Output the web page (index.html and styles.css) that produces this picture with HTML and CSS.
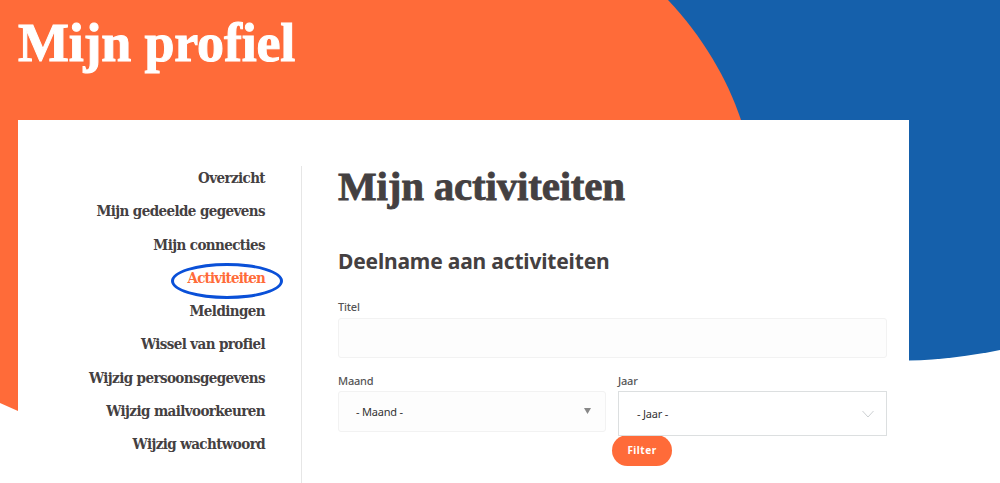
FILE: index.html
```html
<!DOCTYPE html>
<html lang="nl">
<head>
<meta charset="utf-8">
<title>Mijn profiel</title>
<link rel="stylesheet" href="styles.css">
</head>
<body>
<svg class="backdrop" viewBox="0 0 1000 483" width="1000" height="483" aria-hidden="true">
  <path class="blue" d="M600 0H1000V350C970 356 940 360 909 360.500L600 360Z"/>
  <path class="orange" d="M0 0H668C702 36 727 78 741 120V411H18L0 403Z"/>
  <rect class="white" x="18" y="120" width="891" height="363"/>
</svg>
<div class="page">
  <header class="hero"><h1>Mijn profiel</h1></header>
  <div class="card">
    <nav class="side">
      <a href="#">Overzicht</a>
      <a href="#">Mijn gedeelde gegevens</a>
      <a href="#">Mijn connecties</a>
      <a href="#" class="active">Activiteiten</a>
      <a href="#">Meldingen</a>
      <a href="#">Wissel van profiel</a>
      <a href="#">Wijzig persoonsgegevens</a>
      <a href="#">Wijzig mailvoorkeuren</a>
      <a href="#">Wijzig wachtwoord</a>
    </nav>
    <main class="content">
      <h2>Mijn activiteiten</h2>
      <h3>Deelname aan activiteiten</h3>
      <form class="filter">
        <div class="field">
          <div class="label">Titel</div>
          <div class="input"></div>
        </div>
        <div class="selects">
          <div class="col">
            <div class="label">Maand</div>
            <div class="select plain"><span>- Maand -</span>
              <svg class="tri" width="7" height="6" viewBox="0 0 7 6"><path d="M0 0H7L3.500 6Z"/></svg>
            </div>
          </div>
          <div class="col">
            <div class="label">Jaar</div>
            <div class="select boxed"><span>- Jaar -</span>
              <svg class="chev" width="12" height="8" viewBox="0 0 12 8"><path d="M0.500 1L6 7L11.500 1"/></svg>
            </div>
          </div>
        </div>
        <div class="actions"><button type="button" class="btn">Filter</button></div>
      </form>
    </main>
  </div>
</div>
</body>
</html>
```
FILE: styles.css
```css
html, body { margin: 0; height: 483px; overflow: hidden; background: #fff; }
body { position: relative; font-family: "Noto Sans", sans-serif; color: #444041; }
.backdrop { position: absolute; left: 0; top: 0; display: block; }
.blue { fill: #1560ab; }
.orange { fill: #ff6b39; }
.white { fill: #fff; }
.page { position: relative; padding: 0 91px 0 18px; }
.hero { height: 120px; }
.hero h1 { margin: 0; padding-top: 11px; font: 700 54px/64px "Liberation Serif", serif; color: #fff; letter-spacing: -0.2px; -webkit-text-stroke: 1px #fff; }
.card { display: flex; padding-top: 46px; background: #fff; height: 317px; }
.side { width: 247px; padding-right: 36px; border-right: 1px solid #e6e6e6; display: flex; flex-direction: column; align-items: flex-end; }
.side a { position: relative; font: 700 15px/24px "DejaVu Serif", serif; font-stretch: condensed; letter-spacing: -0.6px; color: #444041; text-decoration: none; height: 33.300px; }
.side a.active { color: #ff6b39; letter-spacing: -0.85px; }
.side a.active::after { content: ""; position: absolute; right: -18px; top: -3px; width: 106px; height: 30px; border: 3px solid #0a50d8; border-radius: 50%; }
.content { width: 549px; margin-left: 36px; }
.content h2 { margin: -2px 0 0; font: 700 41px/44px "Liberation Serif", serif; letter-spacing: -0.2px; -webkit-text-stroke: 0.8px #444041; }
.content h3 { margin: 38px 0 0; font: 700 21px/30px "Noto Sans", sans-serif; letter-spacing: -0.18px; color: #444041; }
.filter { margin-top: 23px; }
.label { font-size: 11px; line-height: 15px; font-weight: 500; letter-spacing: -0.2px; color: #555; }
.input { margin-top: 4px; height: 38px; border: 1px solid #f2f2f2; border-radius: 3px; background: #fdfdfd; }
.selects { display: grid; grid-template-columns: 268px 269px; gap: 12px; margin-top: 15px; align-items: start; }
.select { display: flex; align-items: center; justify-content: space-between; margin-top: 3px; font-size: 11px; letter-spacing: -0.2px; color: #333; box-sizing: border-box; }
.select span { line-height: 15px; }
.plain { height: 41px; border: 1px solid #f2f2f2; border-radius: 3px; background: #fdfdfd; padding: 0 14px 0 17px; }
.tri { margin-bottom: 2px; }
.boxed { height: 45px; border: 1px solid #dcdfe0; background: #fff; padding: 0 12px 0 18px; }
.tri path { fill: #888; }
.chev path { fill: none; stroke: #ccd0d2; stroke-width: 1; }
.actions { padding-left: 274px; margin-top: -1px; }
.btn { display: block; width: 60px; height: 31px; border: 0; border-radius: 16px; background: #ff6b39; color: #fff; font: 700 10px/31px "Noto Sans", sans-serif; letter-spacing: 0.5px; padding: 0; }
```
